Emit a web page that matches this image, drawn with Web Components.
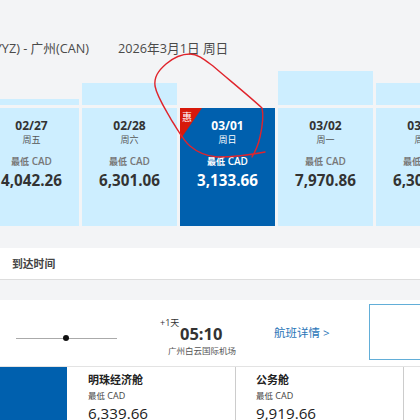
<!DOCTYPE html>
<html>
<head>
<meta charset="utf-8">
<style>
  html, body { margin: 0; height: 100%; overflow: hidden; background: #f3f4f6; }
  body { font-family: "Open Sans", "Noto Sans CJK SC", sans-serif; color: #333; }
</style>
</head>
<body>
<fare-page>
  <route-header route="(YYZ) - 广州(CAN)" date="2026年3月1日 周日"></route-header>
  <date-chart>
    <date-col bar="6" date="02/27" day="周五" price="4,042.26"></date-col>
    <date-col bar="22" date="02/28" day="周六" price="6,301.06"></date-col>
    <date-col active date="03/01" day="周日" price="3,133.66"></date-col>
    <date-col bar="34" date="03/02" day="周一" price="7,970.86"></date-col>
    <date-col bar="22" date="03/03" day="周二" price="6,301.06"></date-col>
  </date-chart>
  <sort-bar>到达时间</sort-bar>
  <flight-row></flight-row>
  <cabin-row>
    <cabin-cell name="明珠经济舱" price="6,339.66"></cabin-cell>
    <cabin-cell name="公务舱" price="9,919.66"></cabin-cell>
  </cabin-row>
  <pen-mark></pen-mark>
</fare-page>

<script>
// small helper so each element only declares its css + markup
function shadow(el, html) {
  el.attachShadow({ mode: "open" }).innerHTML = html;
}

class FarePage extends HTMLElement {
  constructor() {
    super();
    shadow(this, `
      <style>
        :host { display: block; position: relative; width: 420px; height: 420px; overflow: hidden; }
      </style>
      <slot></slot>`);
  }
}

class RouteHeader extends HTMLElement {
  connectedCallback() {
    shadow(this, `
      <style>
        :host { display: flex; gap: 29px; height: 71px; padding-top: 40px; box-sizing: border-box;
                margin-left: -9px; font-size: 12.7px; line-height: 17px; color: #4a4a4a; white-space: nowrap; }
      </style>
      <span>${this.getAttribute("route")}</span>
      <span>${this.getAttribute("date")}</span>`);
  }
}

class DateChart extends HTMLElement {
  constructor() {
    super();
    shadow(this, `
      <style>
        :host { display: flex; align-items: flex-end; gap: 3px; height: 155px; margin-left: -16px; }
      </style>
      <slot></slot>`);
  }
}

class DateCol extends HTMLElement {
  connectedCallback() {
    const bar = this.getAttribute("bar");
    shadow(this, `
      <style>
        :host { display: block; flex: 0 0 95px; }
        .bar { background: #cdeeff; margin-bottom: 3px; }
        .card { position: relative; height: 118px; box-sizing: border-box; padding-top: 10px;
                background: #cdeeff; text-align: center; color: #333; overflow: hidden; }
        :host([active]) .card { background: #0060ae; color: #fff; }
        .date { font-size: 12px; font-weight: 700; line-height: 15px; }
        .day { font-size: 9px; line-height: 12px; margin-top: 1px; color: #555; }
        .min { font-size: 10px; font-weight: 600; line-height: 14px; margin-top: 8px; color: #777; }
        .min span { font-size: 9px; }
        .price { font-size: 15.2px; font-weight: 700; line-height: 22px; }
        :host([active]) .day, :host([active]) .min { color: #fff; }
        .tag { position: absolute; left: 0; top: 0; width: 0; height: 0;
               border-top: 32px solid #d7190b; border-right: 22px solid transparent; }
        .tag-text { position: absolute; left: 2px; top: 3px; font-size: 10px; line-height: 13px; color: #fff; }
      </style>
      ${bar ? `<div class="bar" style="height:${bar}px"></div>` : ""}
      <div class="card">
        ${this.hasAttribute("active") ? `<div class="tag"></div><div class="tag-text">惠</div>` : ""}
        <div class="date">${this.getAttribute("date")}</div>
        <div class="day">${this.getAttribute("day")}</div>
        <div class="min"><span>最低</span> CAD</div>
        <div class="price">${this.getAttribute("price")}</div>
      </div>`);
  }
}

class SortBar extends HTMLElement {
  constructor() {
    super();
    shadow(this, `
      <style>
        :host { display: flex; align-items: center; height: 30px; margin-top: 22px; padding: 0 0 1px 12px;
                background: #fff; border-bottom: 1px solid #ddd; font-size: 10.8px; font-weight: 700; color: #444; }
      </style>
      <slot></slot>`);
  }
}

class FlightRow extends HTMLElement {
  constructor() {
    super();
    shadow(this, `
      <style>
        :host { display: flex; height: 66px; margin-top: 20px; background: #fff;
                border-bottom: 1px solid #e3e3e3; white-space: nowrap; }
        .line { flex: none; position: relative; align-self: flex-start; width: 101px; height: 1px; margin: 38px 0 0 16px; background: #aaa; }
        .stop { position: absolute; left: 47px; top: -3px; width: 6px; height: 6px; border-radius: 50%; background: #111; }
        .arrive { flex: none; width: 68px; margin-left: 51px; position: relative; }
        .plus { position: absolute; left: -8px; top: 17px; font-size: 9px; line-height: 12px; color: #333; }
        .time { margin-top: 24px; padding-left: 12px; font-size: 16.5px; font-weight: 700; line-height: 20px; color: #333; }
        .airport { font-size: 8.5px; line-height: 12px; margin-top: 1px; color: #555; }
        .detail { flex: none; margin: 25px 0 0 38px; font-size: 11.5px; line-height: 16px; color: #2a76b8; width: 57px; }
        .fare { flex: none; width: 80px; height: 54px; margin: 4px 0 0 38px; border: 1px solid #62aed8; }
      </style>
      <div class="line"><div class="stop"></div></div>
      <div class="arrive">
        <span class="plus">+1天</span>
        <div class="time">05:10</div>
        <div class="airport">广州白云国际机场</div>
      </div>
      <div class="detail">航班详情 &gt;</div>
      <div class="fare"></div>`);
  }
}

class CabinRow extends HTMLElement {
  constructor() {
    super();
    shadow(this, `
      <style>
        :host { display: flex; height: 53px; background: #fff; }
        .side { flex: 0 0 67px; margin-right: 1px; background: #0060ae; }
        .end { flex: 1; }
      </style>
      <div class="side"></div>
      <slot></slot>
      <div class="end"></div>`);
  }
}

class CabinCell extends HTMLElement {
  connectedCallback() {
    shadow(this, `
      <style>
        :host { display: block; flex: 0 0 147px; padding-left: 20px; border-right: 1px solid #ccc; color: #222; }
        .name { font-size: 11px; font-weight: 700; line-height: 17px; margin-top: 4px; }
        .min { font-size: 9px; line-height: 13px; margin-top: 1px; color: #444; }
        .min span { font-size: 8.5px; }
        .price { font-size: 15.2px; line-height: 22px; }
      </style>
      <div class="name">${this.getAttribute("name")}</div>
      <div class="min"><span>最低</span> CAD</div>
      <div class="price">${this.getAttribute("price")}</div>`);
  }
}

// hand drawn annotation on top of the screenshot
class PenMark extends HTMLElement {
  constructor() {
    super();
    shadow(this, `
      <style>
        :host { display: block; position: absolute; inset: 0; pointer-events: none; }
        svg { display: block; }
      </style>
      <svg width="420" height="420" fill="none" stroke="#e0242c" stroke-width="1.4" stroke-linecap="round" stroke-linejoin="round">
        <path d="M265 152 C250 155 232 157 217 157 C205 156 197 152 190 146 C183 140 178 130 172 121 C166 110 157 97 155 86 C154 77 158 71 166 64 C173 58 182 54 190 54 C198 54 205 60 213 66 C228 79 248 95 262 108 C264 116 262 128 260 137 C258 146 255 152 252 157"/>
      </svg>`);
  }
}

customElements.define("fare-page", FarePage);
customElements.define("route-header", RouteHeader);
customElements.define("date-chart", DateChart);
customElements.define("date-col", DateCol);
customElements.define("sort-bar", SortBar);
customElements.define("flight-row", FlightRow);
customElements.define("cabin-row", CabinRow);
customElements.define("cabin-cell", CabinCell);
customElements.define("pen-mark", PenMark);
</script>
</body>
</html>
